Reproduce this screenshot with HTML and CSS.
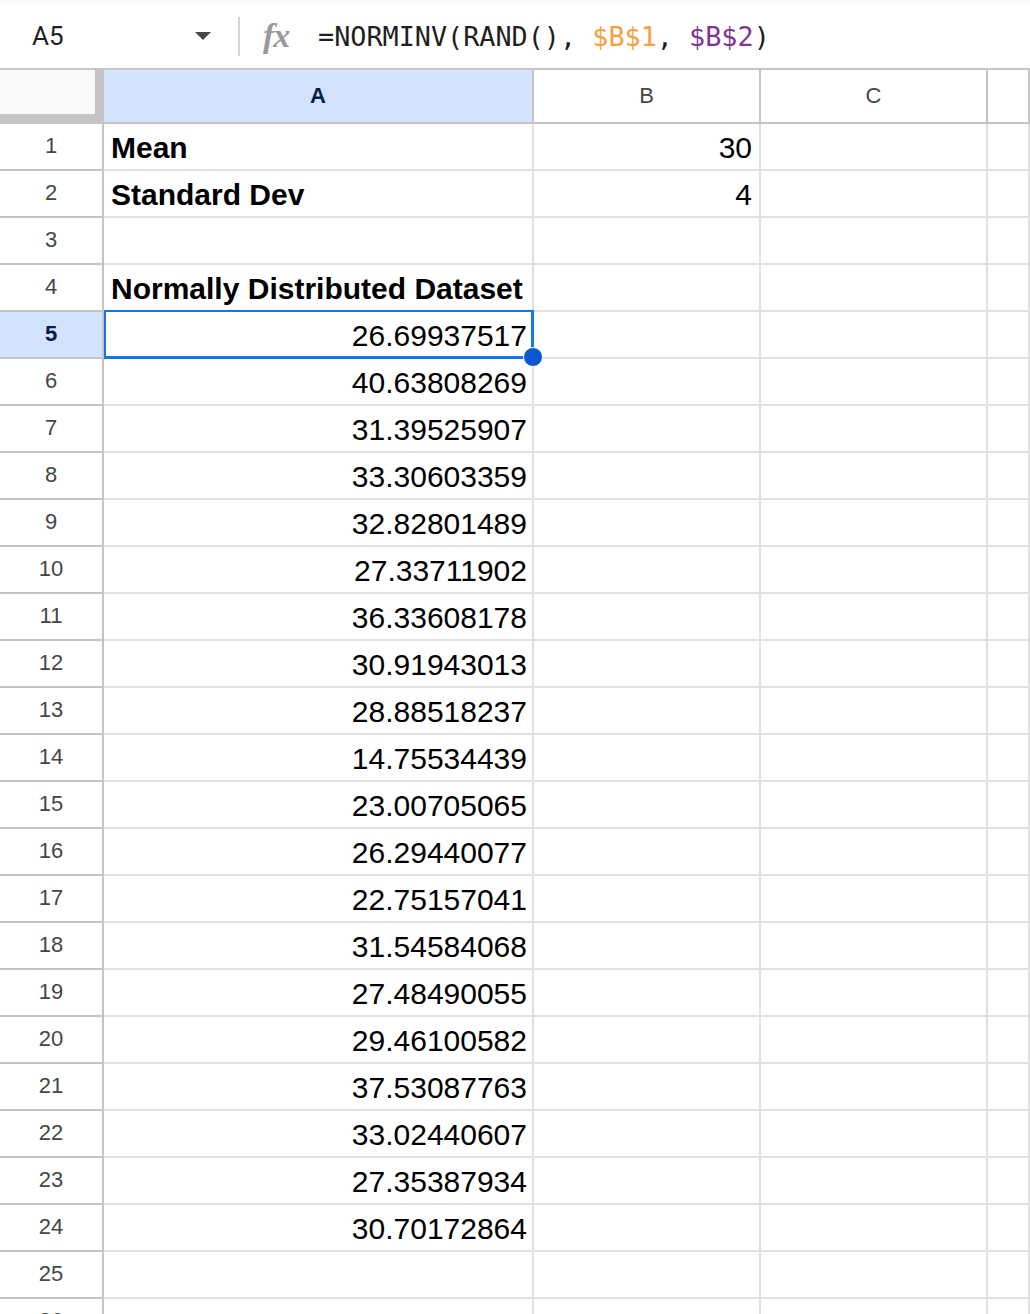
FILE: index.html
```html
<!DOCTYPE html>
<html lang="en">
<head>
    <meta charset="UTF-8">
    <title>NORMINV dataset</title>
    <link rel="stylesheet" href="styles.css">
</head>
<body>
    <div class="formula-bar">
        <div class="namebox">
            <span class="cell-ref">A5</span>
            <span class="caret"></span>
        </div>
        <div class="sep"></div>
        <span class="fx">fx</span>
        <span class="formula">=NORMINV(RAND(), <span class="ref-1">$B$1</span>, <span class="ref-2">$B$2</span>)</span>
    </div>

    <div class="sheet">
        <div class="row col-head">
            <div class="corner"></div>
            <div class="ch active">A</div>
            <div class="ch">B</div>
            <div class="ch">C</div>
            <div class="ch"></div>
        </div>
        <div id="rows"></div>
    </div>

    <script>
        var data = [
            ['Mean', '30'],
            ['Standard Dev', '4'],
            ['', ''],
            ['Normally Distributed Dataset', ''],
            ['26.69937517', ''],
            ['40.63808269', ''],
            ['31.39525907', ''],
            ['33.30603359', ''],
            ['32.82801489', ''],
            ['27.33711902', ''],
            ['36.33608178', ''],
            ['30.91943013', ''],
            ['28.88518237', ''],
            ['14.75534439', ''],
            ['23.00705065', ''],
            ['26.29440077', ''],
            ['22.75157041', ''],
            ['31.54584068', ''],
            ['27.48490055', ''],
            ['29.46100582', ''],
            ['37.53087763', ''],
            ['33.02440607', ''],
            ['27.35387934', ''],
            ['30.70172864', ''],
            ['', ''],
            ['', '']
        ];

        var rows = document.getElementById('rows');
        var html = '';
        data.forEach(function(r, i) {
            var n = i + 1;
            var aClass = 'cell';
            if (n <= 4) aClass += ' label';
            else aClass += ' num';
            if (n === 5) aClass += ' selected';
            html += '<div class="row">' +
                '<div class="rh' + (n === 5 ? ' active' : '') + '">' + n + '</div>' +
                '<div class="' + aClass + '">' + r[0] + '</div>' +
                '<div class="cell num col-b">' + r[1] + '</div>' +
                '<div class="cell"></div>' +
                '<div class="cell"></div>' +
                '</div>';
        });
        rows.innerHTML = html;
    </script>
</body>
</html>
```

FILE: styles.css
```css
* {
    box-sizing: border-box;
}

body {
    margin: 0;
    width: 1030px;
    height: 1314px;
    overflow: hidden;
    background: #fff;
    font-family: 'Liberation Sans', Arial, sans-serif;
    color: #000;
}

/* formula bar */
.formula-bar {
    display: flex;
    align-items: center;
    height: 70px;
    border-top: 4px solid #f8fafd;
    border-bottom: 2px solid #c4c7c5;
    background: #fff;
}

.namebox {
    display: flex;
    align-items: center;
    justify-content: space-between;
    width: 225px;
    padding-left: 32px;
    padding-right: 14px;
}

.cell-ref {
    font-family: Roboto, 'Liberation Sans', sans-serif;
    font-size: 26px;
    color: #1f1f1f;
}

.caret {
    width: 0;
    height: 0;
    border-left: 8px solid transparent;
    border-right: 8px solid transparent;
    border-top: 8px solid #444746;
}

.sep {
    width: 2px;
    height: 39px;
    margin-left: 13px;
    background: #d3d3d3;
}

.fx {
    margin-left: 23px;
    width: 36px;
    font-family: 'Liberation Serif', serif;
    font-style: italic;
    font-weight: bold;
    font-size: 34px;
    color: #9a9a9a;
    letter-spacing: -1px;
}

.formula {
    margin-left: 19px;
    font-family: 'DejaVu Sans Mono', 'Liberation Mono', monospace;
    font-size: 26.8px;
    color: #1f1f1f;
}

.ref-1 {
    color: #f7a03d;
}

.ref-2 {
    color: #7e3794;
}

/* grid */
.row {
    display: grid;
    grid-template-columns: 104px 430px 227px 227px 1fr;
    height: 47px;
}

.col-head {
    height: 54px;
}

.corner {
    background: #f8f9fa;
    border-right: 9px solid #c4c4c4;
    border-bottom: 10px solid #c4c4c4;
}

.ch {
    display: flex;
    align-items: center;
    justify-content: center;
    border-right: 2px solid #c4c4c4;
    border-bottom: 2px solid #c4c4c4;
    font-size: 22px;
    color: #444746;
}

.ch.active {
    background: #d3e3fd;
    color: #041e49;
    font-weight: bold;
}

.rh {
    display: flex;
    align-items: center;
    justify-content: center;
    border-right: 2px solid #c4c4c4;
    border-bottom: 2px solid #c4c4c4;
    font-size: 22px;
    color: #444746;
    padding-bottom: 2px;
}

.rh.active {
    background: #d3e3fd;
    color: #041e49;
    font-weight: bold;
}

.cell {
    display: flex;
    align-items: center;
    border-right: 2px solid #e1e1e1;
    border-bottom: 2px solid #e1e1e1;
    font-size: 30px;
    white-space: nowrap;
    padding: 2px 5px 0 8px;
    position: relative;
}

.cell.label {
    font-weight: bold;
    font-size: 30px;
    padding-left: 7px;
}

.cell.num {
    justify-content: flex-end;
}

.cell.col-b {
    padding-right: 7px;
}

.cell.selected::before {
    content: "";
    position: absolute;
    top: -2px;
    left: 0;
    right: -2px;
    bottom: -2px;
    border: 3px solid #1a73e8;
    border-left-width: 2px;
    border-top-width: 2px;
}

.cell.selected::after {
    content: "";
    position: absolute;
    right: -11px;
    bottom: -10px;
    width: 18px;
    height: 18px;
    border-radius: 50%;
    background: #0b57d0;
    border: 1.5px solid #fff;
    z-index: 2;
}
```
